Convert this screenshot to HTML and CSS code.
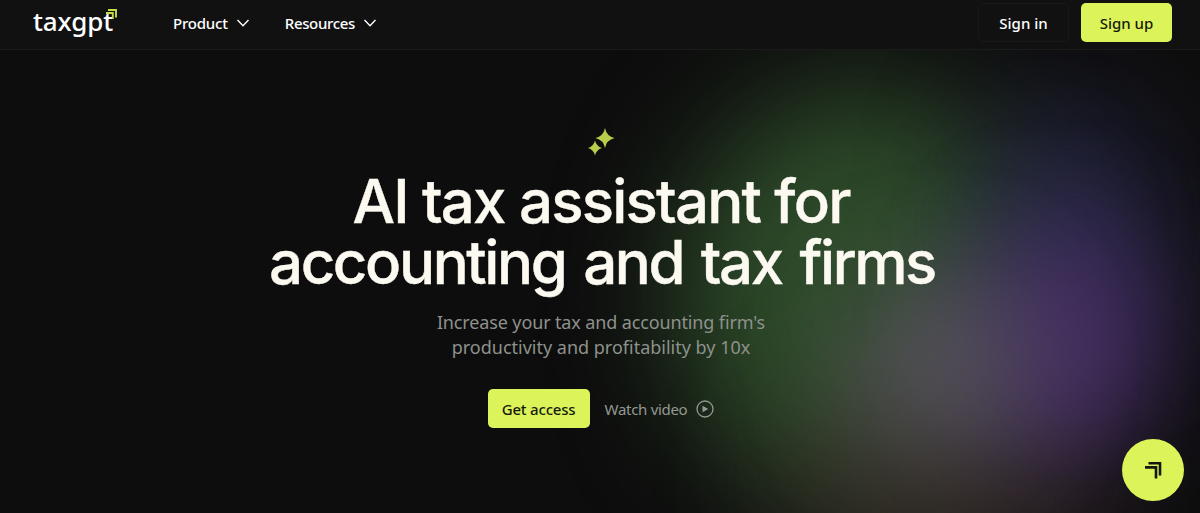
FILE: index.html
```html
<!DOCTYPE html>
<html lang="en">
<head>
  <meta charset="UTF-8" />
  <meta name="viewport" content="width=device-width, initial-scale=1.0"/>
  <title>TaxGPT</title>
  <link rel="stylesheet" href="styles.css">
</head>
<body>
  <header class="navbar">
    <a class="logo" href="#">
      <span class="logo-text">taxgpt</span>
      <svg class="logo-mark" viewBox="0 0 11 11" width="11" height="11">
        <path d="M2 1H10V8.500M0 4H6.800V10" fill="none" stroke="#c3dc4c" stroke-width="1.900"/>
      </svg>
    </a>
    <nav class="menu">
      <a class="menu-item" href="#"><span class="product">Product</span>
        <svg viewBox="0 0 12 8" width="12" height="8"><path d="M.5 1L6 6.7L11.500 1"/></svg>
      </a>
      <a class="menu-item" href="#"><span class="resources">Resources</span>
        <svg viewBox="0 0 12 8" width="12" height="8"><path d="M.5 1L6 6.7L11.500 1"/></svg>
      </a>
    </nav>
    <div class="auth">
      <a class="btn btn-outline" href="#">Sign in</a>
      <a class="btn btn-lime" href="#">Sign up</a>
    </div>
  </header>

  <main class="hero">
    <div class="glow">
      <span class="blob green"></span>
      <span class="blob olive"></span>
      <span class="blob indigo"></span>
      <span class="blob purple"></span>
      <span class="blob mauve"></span>
    </div>
    <svg class="sparkles" viewBox="0 0 28 29" width="28" height="29">
      <path d="M18 1Q19.500 9 27.500 11Q19.500 13 18 21Q16.500 13 8.500 11Q16.500 9 18 1Z"/>
      <path d="M8 13.500Q9.500 19.500 15 21Q9.500 22.500 8 28.500Q6.500 22.500 1 21Q6.500 19.500 8 13.500Z"/>
    </svg>
    <h1>
      <span class="line line-one">AI tax assistant for</span>
      <span class="line line-two">accounting and tax firms</span>
    </h1>
    <p class="subtitle">Increase your tax and accounting firm's<br><span class="sub-two">productivity and profitability by 10x</span></p>
    <div class="cta">
      <a class="btn btn-lime btn-access" href="#">Get access</a>
      <a class="watch" href="#"><span>Watch video</span>
        <svg viewBox="0 0 18 18" width="18" height="18">
          <circle cx="9" cy="9" r="8" fill="none" stroke="currentColor" stroke-width="1.300"/>
          <path d="M6.500 5.700L12.300 9L6.500 12.300Z" fill="currentColor"/>
        </svg>
      </a>
    </div>
  </main>

  <button class="chat-btn" aria-label="Open chat">
    <svg viewBox="0 0 18 18" width="18" height="18">
      <path d="M4.500 2.200H16V14.500M1 6.400H12V17.500" fill="none" stroke="#14170c" stroke-width="2.600"/>
    </svg>
  </button>
</body>
</html>
```
FILE: styles.css
```css
* {
  box-sizing: border-box;
}
body {
  margin: 0;
  height: 513px;
  overflow: hidden;
  background: #0d0d0d;
  color: #fff;
  font-family: "Noto Sans", "Open Sans", sans-serif;
}
a {
  color: inherit;
  text-decoration: none;
}
.navbar {
  display: flex;
  align-items: flex-start;
  height: 50px;
  padding: 0 28px 0 33px;
  background: #111;
  border-bottom: 1px solid #1b1b1b;
}
.logo {
  display: flex;
  width: 84px;
  padding-top: 6px;
}
.logo-text {
  font-size: 26px;
  font-weight: 500;
  line-height: 30px;
  letter-spacing: -0.2px;
}
.logo-mark {
  flex: none;
  margin: 3px 0 0 -7px;
}
.menu {
  display: flex;
  gap: 36px;
  margin-left: 56px;
}
.menu-item {
  display: flex;
  align-items: center;
  gap: 9px;
  height: 46px;
  font-size: 15px;
  font-weight: 500;
  letter-spacing: -0.2px;
}
.resources {
  letter-spacing: -0.35px;
}
.menu-item svg {
  fill: none;
  stroke: #fff;
  stroke-width: 1.4;
}
.auth {
  display: flex;
  gap: 12px;
  margin-left: auto;
  padding-top: 3px;
}
.btn {
  display: flex;
  align-items: center;
  justify-content: center;
  width: 91px;
  height: 39px;
  border-radius: 5px;
  font-size: 15px;
  font-weight: 500;
}
.btn-outline {
  border: 1px solid #191919;
}
.btn-lime {
  background: #dcf45a;
  color: #171b0b;
}
.hero {
  position: relative;
  z-index: 0;
  display: flex;
  flex-direction: column;
  align-items: center;
  height: 463px;
  padding-top: 77px;
  padding-left: 2px;
}
/* soft colour lights behind the headline */
.glow {
  position: absolute;
  inset: 0;
  z-index: -1;
  overflow: hidden;
}
.blob {
  position: absolute;
  border-radius: 50%;
  filter: blur(60px);
}
.green {
  left: 675px;
  top: 35px;
  width: 370px;
  height: 425px;
  background: rgba(52, 86, 47, 0.85);
}
.olive {
  left: 780px;
  top: 340px;
  width: 330px;
  height: 200px;
  background: rgba(58, 46, 42, 0.7);
}
.indigo {
  left: 980px;
  top: 50px;
  width: 180px;
  height: 260px;
  background: rgba(46, 46, 90, 0.7);
}
.purple {
  left: 965px;
  top: 175px;
  width: 200px;
  height: 240px;
  background: rgba(73, 47, 105, 0.85);
  filter: blur(50px);
}
.mauve {
  left: 845px;
  top: 220px;
  width: 190px;
  height: 190px;
  background: rgba(98, 88, 104, 0.65);
  filter: blur(50px);
}
.sparkles {
  fill: #b9cd4d;
}
h1 {
  margin: 15px 0 0;
  font-family: Inter, sans-serif;
  font-size: 60px;
  font-weight: 500;
  line-height: 61px;
  color: #fbf9f0;
  text-align: center;
  -webkit-text-stroke: 0.4px #fbf9f0;
}
.line {
  display: block;
  white-space: nowrap;
}
.line-one {
  letter-spacing: -1.8px;
}
.line-two {
  padding-left: 2px;
  letter-spacing: -2.4px;
  word-spacing: 4px;
}
.subtitle {
  margin: 17px 0 0;
  font-size: 18px;
  line-height: 25px;
  letter-spacing: -0.13px;
  color: #8e918c;
  text-align: center;
}
.sub-two {
  letter-spacing: 0;
}
.cta {
  display: flex;
  align-items: center;
  gap: 15px;
  margin-top: 29px;
}
.btn-access {
  width: 102px;
  letter-spacing: -0.2px;
}
.watch {
  display: flex;
  align-items: center;
  gap: 9px;
  font-size: 15px;
  letter-spacing: -0.3px;
  color: #959893;
}
.chat-btn {
  position: fixed;
  right: 16px;
  bottom: 12px;
  display: flex;
  align-items: center;
  justify-content: center;
  width: 62px;
  height: 62px;
  padding: 0;
  border: none;
  border-radius: 50%;
  background: #dcf45a;
  cursor: pointer;
}
```
